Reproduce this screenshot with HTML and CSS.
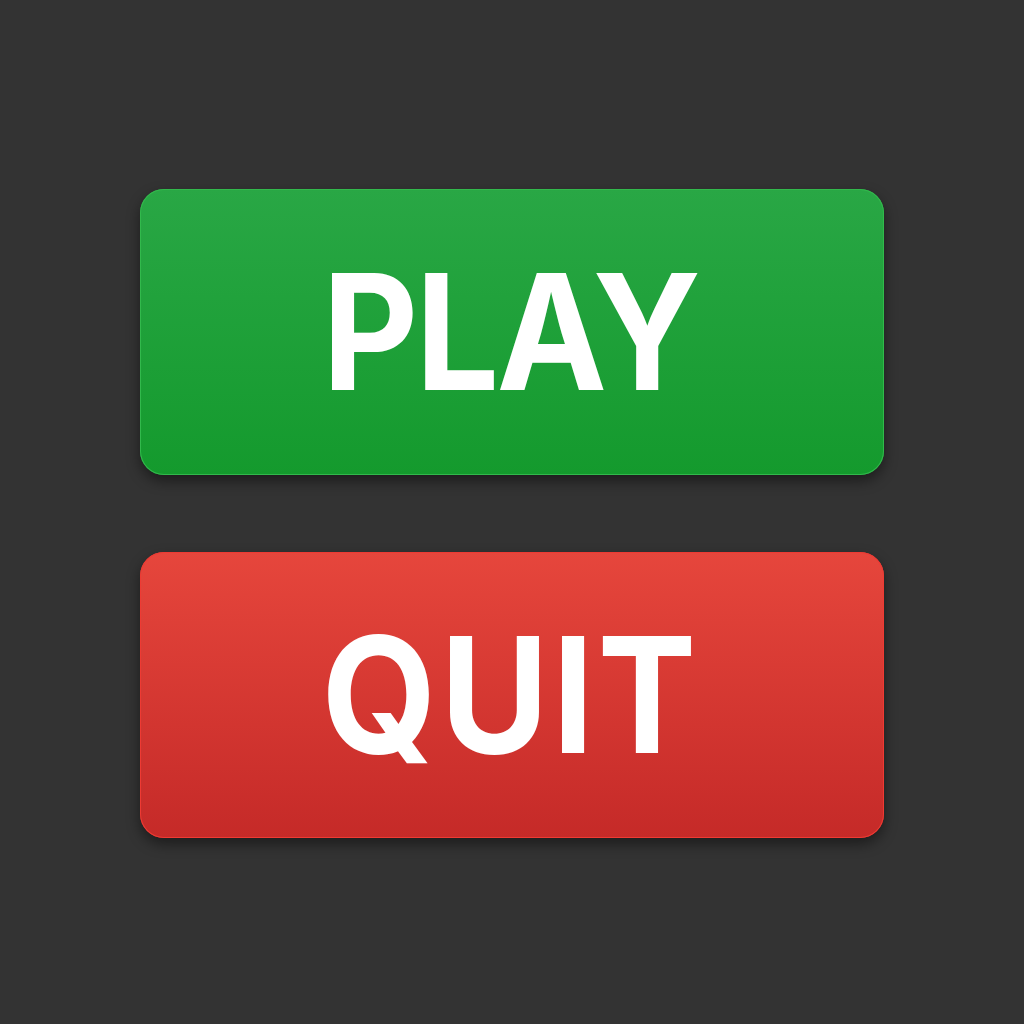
FILE: index.html
```html
<!DOCTYPE html>
<html>
<head>
<meta charset="utf-8">
<link rel="stylesheet" href="styles.css">
</head>
<body>
<main class="menu">
  <button class="btn btn-play"><span class="label">PLAY</span></button>
  <button class="btn btn-quit"><span class="label">QUIT</span></button>
</main>
</body>
</html>
```
FILE: styles.css
```css
html, body {
  margin: 0;
  padding: 0;
  width: 1024px;
  height: 1024px;
  background: #333333;
}
.menu {
  height: 1024px;
  display: flex;
  flex-direction: column;
  align-items: center;
  justify-content: center;
  gap: 77px;
  padding-top: 2px;
  box-sizing: border-box;
}
.btn {
  width: 744px;
  height: 286px;
  border: none;
  border-radius: 24px;
  display: flex;
  align-items: center;
  justify-content: center;
  padding: 0;
  margin: 0;
  font-family: Inter, "Liberation Sans", sans-serif;
  font-weight: 700;
  font-size: 161px;
  line-height: 1;
  color: #ffffff;
}
.label {
  display: block;
  transform: scaleX(0.92);
}
.btn-play {
  background: linear-gradient(180deg, #29a745 0%, #149a2d 100%);
  box-shadow: inset 0 0 0 1px #32b94c, 0 6px 14px rgba(0, 0, 0, 0.45);
}
.btn-play .label {
  letter-spacing: -3px;
  margin-right: 3px;
}
.btn-quit {
  background: linear-gradient(180deg, #e6463c 0%, #c52a28 100%);
  box-shadow: inset 0 0 0 1px #ee3a33, 0 6px 14px rgba(0, 0, 0, 0.45);
}
.btn-quit .label {
  letter-spacing: 4px;
  margin-right: 3px;
}
```
